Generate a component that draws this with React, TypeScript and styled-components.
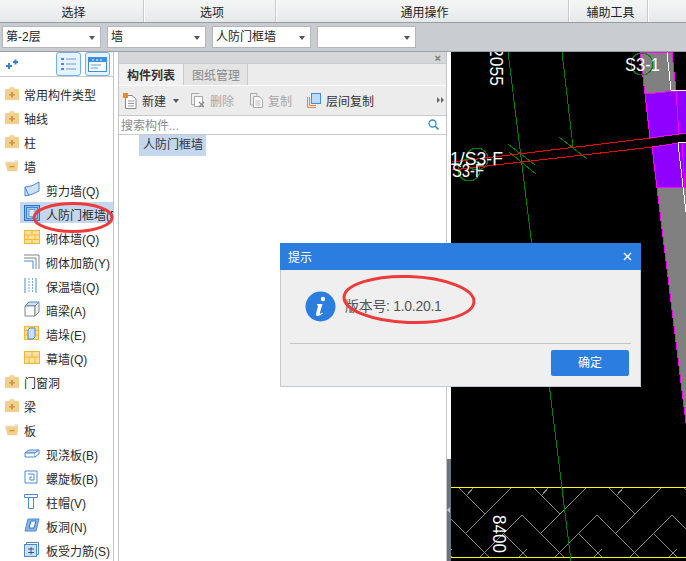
import React from "react";
import styled, { createGlobalStyle } from "styled-components";

const GlobalStyle = createGlobalStyle`
  html, body {
    margin: 0;
    padding: 0;
    background: #fff;
  }
  * {
    box-sizing: border-box;
  }
`;

const Page = styled.div`
  position: relative;
  width: 686px;
  height: 561px;
  overflow: hidden;
  display: flex;
  flex-direction: column;
  font-family: "Liberation Sans", "Noto Sans CJK SC", sans-serif;
  font-size: 12px;
  color: #333;
`;

const MenuBar = styled.div`
  display: grid;
  grid-template-columns: 145px 132px 293px 79px 1fr;
  height: 23px;
  background: linear-gradient(#f4f6f6, #e6e9ea);
  border-bottom: 1px solid #9a9da0;
`;

const MenuGroup = styled.div`
  display: flex;
  align-items: center;
  justify-content: center;
  padding-left: 3px;
  border-right: 1px solid #fff;
  box-shadow: inset -1px 0 0 #c6c9cb;
  color: #222;
`;

const SelectBar = styled.div`
  display: flex;
  align-items: center;
  gap: 6px;
  height: 29px;
  padding: 0 2px;
  background: #c9ccd0;
  border-bottom: 1px solid #9da0a3;
`;

const SelectBox = styled.div`
  position: relative;
  width: 99px;
  height: 22px;
  padding-left: 3px;
  line-height: 20px;
  background: #fff;
  border: 1px solid #b4b7ba;
  color: #222;

  &::after {
    content: "";
    position: absolute;
    right: 5px;
    top: 9px;
    border: 3.5px solid transparent;
    border-top: 4px solid #555;
    border-bottom: 0;
  }
`;

const Main = styled.div`
  flex: 1;
  display: flex;
  min-height: 0;
`;

const TreePanel = styled.div`
  width: 119px;
  flex: none;
  display: flex;
  flex-direction: column;
  border-right: 1px solid #c2c4c7;
  background: linear-gradient(to right, #fff 113px, #c2c4c7 113px, #c2c4c7 114px, #fff 114px);
`;

const TreeHead = styled.div`
  display: flex;
  align-items: center;
  gap: 4px;
  width: 113px;
  height: 28px;
  padding-left: 6px;
  border-bottom: 1px solid #c8cacc;
  background: #fff;
`;

const AddIcon = styled.svg`
  margin-right: 34px;
`;

const ViewButton = styled.div`
  width: 25px;
  height: 24px;
  display: flex;
  align-items: center;
  justify-content: center;
  background: #e6f2fd;
  border: 1px solid #6fb1ee;
  border-radius: 3px;
`;

const TreeList = styled.div`
  padding-top: 4px;
`;

const TreeRow = styled.div<{ $child?: boolean; $selected?: boolean }>`
  position: relative;
  display: flex;
  align-items: center;
  width: 113px;
  height: 24px;
  padding-left: ${({ $child }) => ($child ? "24px" : "5px")};
  gap: ${({ $child }) => ($child ? "6px" : "5px")};
  white-space: nowrap;
  overflow: hidden;
  color: #2a2a2a;

  ${({ $selected }) =>
    $selected &&
    `
    &::before {
      content: "";
      position: absolute;
      left: 20px;
      right: 0;
      top: 1px;
      bottom: 2px;
      background: #c5d7ee;
    }
  `}
`;

const RowIcon = styled.span<{ $child?: boolean }>`
  position: relative;
  display: flex;
  flex: none;
  width: ${({ $child }) => ($child ? "16px" : "14px")};
`;

const RowLabel = styled.span`
  position: relative;
  padding-top: 2px;
`;

const ListPanel = styled.div`
  width: 328px;
  flex: none;
  display: flex;
  flex-direction: column;
  border-right: 1px solid #c2c4c7;
`;

const PanelStrip = styled.div`
  display: flex;
  align-items: center;
  justify-content: flex-end;
  height: 11px;
  padding-right: 5px;
  background: #d4d6da;
  color: #777;
  font-size: 11px;
  font-weight: bold;
`;

const TabRow = styled.div`
  display: flex;
  height: 23px;
  background: #ececec;
  border-top: 1px solid #c8cacc;
  border-bottom: 1px solid #fff;
`;

const Tab = styled.div<{ $active?: boolean }>`
  display: flex;
  align-items: center;
  padding: 0 8px;
  width: ${({ $active }) => ($active ? "65px" : "64px")};
  white-space: nowrap;
  font-weight: ${({ $active }) => ($active ? "bold" : "normal")};
  color: ${({ $active }) => ($active ? "#333" : "#8a8a8a")};
  background: ${({ $active }) => ($active ? "#f1f1f1" : "#e4e4e4")};
  border-right: 1px solid #c8cacc;
`;

const ToolRow = styled.div`
  position: relative;
  display: flex;
  align-items: center;
  height: 30px;
  padding-left: 4px;
  background: #ececec;
  border-bottom: 1px solid #c8cacc;
`;

const ToolItem = styled.div<{ $off?: boolean; $gap: number }>`
  display: flex;
  align-items: center;
  gap: 5px;
  margin-right: ${({ $gap }) => $gap}px;
  white-space: nowrap;
  color: ${({ $off }) => ($off ? "#a8a8a8" : "#333")};
`;

const Caret = styled.span`
  width: 0;
  height: 0;
  margin-right: 12px;
  border: 3px solid transparent;
  border-top: 4px solid #555;
  border-bottom: 0;
`;

const MoreArrows = styled.svg`
  position: absolute;
  right: 2px;
  top: 11px;
`;

const SearchRow = styled.div`
  display: flex;
  align-items: center;
  justify-content: space-between;
  height: 19px;
  padding: 0 7px 1px 2px;
  color: #8a8a8a;
  border-bottom: 1px solid #c8cacc;
`;

const ItemList = styled.div`
  padding: 0 0 0 20px;
`;

const Item = styled.div`
  width: 67px;
  height: 21px;
  line-height: 20px;
  padding-left: 4px;
  white-space: nowrap;
  background: #c5d7ee;
`;

const Splitter = styled.div`
  width: 4px;
  flex: none;
  display: flex;
  flex-direction: column;
  justify-content: flex-end;
  background: #fff;
`;

const SplitterGrip = styled.div`
  height: 102px;
  display: flex;
  align-items: center;
  background: #68747e;

  &::before {
    content: "";
    border: 3px solid transparent;
    border-right: 3px solid #c8ccd0;
    border-left: 0;
  }
`;

const Canvas = styled.div`
  flex: 1;
  background: #000;
  overflow: hidden;
`;

const CanvasDrawing = styled.svg`
  display: block;
  shape-rendering: crispEdges;
`;

const CadText = styled.text`
  fill: #fff;
  font-family: "Liberation Sans", sans-serif;
  font-size: 19px;
`;

const Dialog = styled.div`
  position: absolute;
  left: 280px;
  top: 243px;
  width: 361px;
  height: 144px;
  display: flex;
  flex-direction: column;
  background: #efefef;
  border: 1px solid #c4c9d0;
`;

const DialogTitle = styled.div`
  display: flex;
  align-items: center;
  justify-content: space-between;
  flex: none;
  height: 27px;
  margin: -1px -1px 0;
  padding: 0 9px 0 8px;
  background: #2b7de0;
  color: #fff;
`;

const DialogBody = styled.div`
  flex: 1;
  display: flex;
  align-items: center;
  gap: 9px;
  padding: 0 0 0 24px;
`;

const DialogText = styled.span`
  padding-bottom: 4px;
  color: #555;
  font-size: 14px;
  letter-spacing: -0.3px;
`;

const DialogFooter = styled.div`
  display: flex;
  justify-content: flex-end;
  flex: none;
  height: 43px;
  margin: 0 9px;
  padding: 6px 2px 0 0;
  border-top: 1px solid #c4c5c7;
`;

const OkButton = styled.div`
  width: 78px;
  height: 26px;
  line-height: 26px;
  text-align: center;
  background: #2b7de0;
  border-radius: 2px;
  color: #fff;
`;

const Marker = styled.svg`
  position: absolute;
  left: 0;
  top: 0;
  pointer-events: none;
`;

const FolderClosed = () => (
  <svg width="14" height="13" viewBox="0 0 14 13">
    <path d="M4 2 Q4 0 6 0 H9 Q10 0 10 2 Z" fill="#f0d8a8" />
    <rect y="2" width="14" height="11" fill="#f3cf8d" />
    <path d="M6 5 H8 V7 H10 V8.500 H8 V10.500 H6 V8.500 H4 V7 H6 Z" fill="#c99b45" />
  </svg>
);

const FolderOpen = () => (
  <svg width="16" height="13" viewBox="0 0 16 13">
    <path d="M1 2 H11 V0.500 H15 V4 H1 Z" fill="#e9e2cf" />
    <path d="M0 3 H15 L14 13 H3 Z" fill="#f3cf8d" />
    <rect x="5" y="7" width="6" height="1.500" fill="#c99b45" />
  </svg>
);

type IconProps = { kind: string };

const BLUE = "#4a8ad4";
const TINT = "#cfe0f5";
const BRICK = "#f5b731";
const BRICKFILL = "#fbe0a2";

const WallIcon = ({ kind }: IconProps) => {
  switch (kind) {
    case "shear":
      return (
        <svg width="16" height="16" viewBox="0 0 16 16">
          <path d="M1 6 Q8 6 15 1 V10 Q8 14 1 15 Z" fill={TINT} stroke={BLUE} />
          <path d="M1 6 L5 15" stroke={BLUE} fill="none" />
        </svg>
      );
    case "frame":
      return (
        <svg width="16" height="16" viewBox="0 0 16 16">
          <rect x="0.500" y="0.500" width="15" height="15" fill="#8db8ea" stroke="#2f74c8" />
          <rect x="2.500" y="2.500" width="11" height="11" fill="#a9c8ec" stroke="#3f86d8" />
          <rect x="5" y="4.500" width="6" height="7" fill="#dbe8f7" stroke="#6ea4e2" />
        </svg>
      );
    case "brick":
      return (
        <svg width="16" height="14" viewBox="0 0 16 14">
          <rect x="0.500" y="0.500" width="15" height="13" fill={BRICKFILL} stroke={BRICK} />
          <path d="M0 5 H16 M0 9.500 H16 M8 0 V5 M4 5 V9.500 M11 5 V9.500 M8 9.500 V14" stroke={BRICK} />
        </svg>
      );
    case "rebar":
      return (
        <svg width="16" height="15" viewBox="0 0 16 15">
          <path d="M0 1 H15 V15 M0 4 H12 V15" stroke="#7b8794" fill="none" />
          <path d="M0 7 H9 V15" stroke={BLUE} fill="none" />
        </svg>
      );
    case "insulation":
      return (
        <svg width="14" height="15" viewBox="0 0 14 15">
          <path d="M1 0 V15 M12 0 V15" stroke={BLUE} />
          <path d="M5 0 V15 M8.500 0 V15" stroke="#7ca8dc" strokeDasharray="2 1" />
        </svg>
      );
    case "beam":
      return (
        <svg width="16" height="16" viewBox="0 0 16 16">
          <path d="M1 5 L5 1 H15 L11 5 Z" fill={TINT} stroke={BLUE} />
          <path d="M1 5 H11 V15 H1 Z" fill="#fff" stroke="#7b8794" />
          <path d="M11 5 L15 1 V11 L11 15 Z" fill="#eef1f4" stroke="#7b8794" />
        </svg>
      );
    case "pier":
      return (
        <svg width="15" height="14" viewBox="0 0 15 14">
          <rect x="0.500" y="0.500" width="14" height="13" fill={BRICKFILL} stroke={BRICK} />
          <path d="M0 4.500 H15 M0 9 H15 M5 0 V14 M10 0 V14" stroke={BRICK} />
          <path d="M4 4 L6 2 H11 V11 L9 13 H4 Z" fill={TINT} stroke={BLUE} />
        </svg>
      );
    case "curtain":
      return (
        <svg width="16" height="13" viewBox="0 0 16 13">
          <rect x="0.500" y="0.500" width="15" height="12" fill={BRICKFILL} stroke={BRICK} />
          <path d="M0 6 H16 M8 0 V6 M5 6 V13 M11 6 V13" stroke={BRICK} />
        </svg>
      );
    case "slab":
      return (
        <svg width="16" height="9" viewBox="0 0 16 9">
          <path d="M1 4 L5 1 H15 L11 4 Z" fill={TINT} stroke={BLUE} />
          <path d="M1 4 H11 V8 H1 Z" fill="#fff" stroke={BLUE} />
          <path d="M11 4 L15 1 V5 L11 8" fill="#fff" stroke={BLUE} />
        </svg>
      );
    case "spiral":
      return (
        <svg width="14" height="14" viewBox="0 0 14 14">
          <path d="M1 1 H13 V13 H1 Z M4 4 H10 V10 H6 V7 H8" stroke={BLUE} fill="none" />
        </svg>
      );
    case "cap":
      return (
        <svg width="14" height="15" viewBox="0 0 14 15">
          <path d="M0.500 0.500 H13.500 V3.500 H0.500 Z M4.500 3.500 H9.500 V14.500 H4.500 Z" fill="#fff" stroke={BLUE} />
        </svg>
      );
    case "hole":
      return (
        <svg width="16" height="14" viewBox="0 0 16 14">
          <path d="M4 1 H15 L12 13 H1 Z" fill="#8fb5e4" stroke={BLUE} />
          <path d="M7 3 H12 L10 10 H5 Z" fill="#fff" stroke="#2f74c8" />
        </svg>
      );
    default:
      return (
        <svg width="15" height="15" viewBox="0 0 15 15">
          <rect x="0.500" y="2.500" width="12" height="12" fill={TINT} stroke={BLUE} />
          <path d="M2.500 2.500 V0.500 H14.500 V12.500 H12.500" stroke={BLUE} fill="none" />
          <path d="M4 7 H10 M4 10.500 H10 M7 5 V12.500" stroke="#33577f" />
        </svg>
      );
  }
};

const treeRows = [
  { label: "常用构件类型", folder: "closed" },
  { label: "轴线", folder: "closed" },
  { label: "柱", folder: "closed" },
  { label: "墙", folder: "open" },
  { label: "剪力墙(Q)", icon: "shear" },
  { label: "人防门框墙(F)", icon: "frame", selected: true },
  { label: "砌体墙(Q)", icon: "brick" },
  { label: "砌体加筋(Y)", icon: "rebar" },
  { label: "保温墙(Q)", icon: "insulation" },
  { label: "暗梁(A)", icon: "beam" },
  { label: "墙垛(E)", icon: "pier" },
  { label: "幕墙(Q)", icon: "curtain" },
  { label: "门窗洞", folder: "closed" },
  { label: "梁", folder: "closed" },
  { label: "板", folder: "open" },
  { label: "现浇板(B)", icon: "slab" },
  { label: "螺旋板(B)", icon: "spiral" },
  { label: "柱帽(V)", icon: "cap" },
  { label: "板洞(N)", icon: "hole" },
  { label: "板受力筋(S)", icon: "slabbar" },
];

const hatchTile = [
  [18, 0, 45, 27],
  [34, 0, 26, 9],
  [72, 0, 26, 46],
  [7, 28, 49, 70],
  [82, 28, 40, 70],
  [63, 46, 87, 70],
  [79, 70, 87, 62],
];

const CadDrawing = () => (
  <CanvasDrawing width="235" height="509" viewBox="451 52 235 509">
    {/* 墙体 */}
    <path d="M640 52 H672 L676 91 L645 94 Z" fill="#808080" stroke="#ff00ff" />
    <path d="M657 188 L686 423 V187 Z" fill="#808080" />
    <path d="M657 188 L686 423" stroke="#ff00ff" fill="none" />
    <path d="M645 94 L686 90 V133 L650 138 Z" fill="#9000ff" stroke="#ff00ff" />
    <path d="M652 147 L686 142 V187 L657 188 Z" fill="#9000ff" stroke="#ff00ff" />
    <path d="M676 92 L679 135 M682 143 L685 187" stroke="#ff00ff" fill="none" />
    <path d="M667 52 L671 90 H686 M678 143 L683 187 L686 212 M678 143 L686 142" stroke="#fff" fill="none" />

    {/* 填充带 */}
    <clipPath id="band">
      <rect x="451" y="488" width="235" height="69" />
    </clipPath>
    <g clipPath="url(#band)" stroke="#8c8c8c">
      {[365, 440, 515, 590, 665].map((x) =>
        hatchTile.map(([x1, y1, x2, y2], i) => (
          <line key={`${x}-${i}`} x1={x + x1} y1={487 + y1} x2={x + x2} y2={487 + y2} />
        ))
      )}
    </g>
    <path d="M451 487.500 H686 M451 557.500 H686" stroke="#ffff00" />

    {/* 轴线 */}
    <g stroke="#008000" fill="none">
      <path d="M508 52 L571 561 M562 52 L573 147" />
      <path d="M508 144 L535 165 M509 152 L536 174 M559 137 L587 159" />
      <circle cx="642" cy="64" r="11" />
      <circle cx="477" cy="159" r="11" />
      <circle cx="469" cy="170" r="11" />
    </g>
    <path d="M452 162 L651 138 M452 170 L653 147" stroke="#ff0000" fill="none" />

    <CadText x="625" y="71" textLength="35" lengthAdjust="spacingAndGlyphs">S3-1</CadText>
    <CadText x="450" y="165" textLength="53" lengthAdjust="spacingAndGlyphs">1/S3-F</CadText>
    <CadText x="452" y="177" textLength="32" lengthAdjust="spacingAndGlyphs">S3-F</CadText>
    <CadText transform="translate(490 47) rotate(90)" textLength="39" lengthAdjust="spacingAndGlyphs">2055</CadText>
    <CadText transform="translate(493 515) rotate(90)" textLength="38" lengthAdjust="spacingAndGlyphs">8400</CadText>
  </CanvasDrawing>
);

const App: React.FC = () => (
  <Page>
    <GlobalStyle />
    <MenuBar>
      <MenuGroup>选择</MenuGroup>
      <MenuGroup>选项</MenuGroup>
      <MenuGroup>通用操作</MenuGroup>
      <MenuGroup>辅助工具</MenuGroup>
      <span />
    </MenuBar>
    <SelectBar>
      <SelectBox>第-2层</SelectBox>
      <SelectBox>墙</SelectBox>
      <SelectBox>人防门框墙</SelectBox>
      <SelectBox />
    </SelectBar>
    <Main>
      <TreePanel>
        <TreeHead>
          <AddIcon width="12" height="10" viewBox="0 0 12 10">
            <path d="M0 7 H6 M3 4 V10 M7 3 H12 M9.500 0.500 V5.500" stroke="#3b7fd0" strokeWidth="2" fill="none" />
          </AddIcon>
          <ViewButton>
            <svg width="15" height="14" viewBox="0 0 15 14">
              <path d="M0 2 H3 M0 7 H3 M0 12 H3" stroke="#3b8fe0" strokeWidth="2" />
              <path d="M5 2 H15 M5 7 H15 M5 12 H15" stroke="#6d9ccf" />
            </svg>
          </ViewButton>
          <ViewButton>
            <svg width="19" height="15" viewBox="0 0 19 15">
              <rect x="0.500" y="0.500" width="18" height="14" fill="#fff" stroke="#3b8fe0" />
              <rect x="1" y="1" width="17" height="4" fill="#3b8fe0" />
              <path d="M4 3 H6 M8 3 H10 M12 3 H14" stroke="#fff" />
              <path d="M3 8 H13 M3 11 H10" stroke="#5b9ad8" />
            </svg>
          </ViewButton>
        </TreeHead>
        <TreeList>
          {treeRows.map((row) => (
            <TreeRow key={row.label} $child={!row.folder} $selected={row.selected}>
              <RowIcon $child={!row.folder}>
                {row.folder === "closed" && <FolderClosed />}
                {row.folder === "open" && <FolderOpen />}
                {row.icon && <WallIcon kind={row.icon} />}
              </RowIcon>
              <RowLabel>{row.label}</RowLabel>
            </TreeRow>
          ))}
        </TreeList>
      </TreePanel>
      <ListPanel>
        <PanelStrip>×</PanelStrip>
        <TabRow>
          <Tab $active>构件列表</Tab>
          <Tab>图纸管理</Tab>
        </TabRow>
        <ToolRow>
          <ToolItem $gap={7}>
            <svg width="14" height="16" viewBox="0 0 14 16">
              <path d="M2.500 2.500 H9 L13 6 V15.500 H2.500 Z" fill="#fff" stroke="#888" />
              <path d="M5 8 H11 M5 10.500 H11 M5 13 H11" stroke="#999" />
              <rect x="0" y="0" width="5" height="5" fill="#f08a24" />
            </svg>
            新建
          </ToolItem>
          <Caret />
          <ToolItem $off $gap={16}>
            <svg width="14" height="15" viewBox="0 0 14 15">
              <path d="M0.500 0.500 H8.500 M0.500 0.500 V11.500 H3" stroke="#aaa" fill="none" />
              <rect x="3.500" y="3.500" width="8" height="10" fill="#fff" stroke="#aaa" />
              <path d="M8 9 L13 14 M13 9 L8 14" stroke="#888" strokeWidth="1.200" />
            </svg>
            删除
          </ToolItem>
          <ToolItem $off $gap={15}>
            <svg width="13" height="15" viewBox="0 0 13 15">
              <path d="M0.500 0.500 H7 V3 M0.500 0.500 V12 H3" stroke="#aaa" fill="none" />
              <path d="M3.500 3.500 H9 L12.500 6.500 V14.500 H3.500 Z" fill="#fff" stroke="#aaa" />
              <path d="M5.500 8 H10.500 M5.500 10 H10.500 M5.500 12 H10.500" stroke="#bbb" />
            </svg>
            复制
          </ToolItem>
          <ToolItem $gap={0}>
            <svg width="14" height="15" viewBox="0 0 14 15">
              <path d="M0.500 4 V14.500 H9 M2.500 4 V12.500 H9" stroke="#e8853a" fill="none" />
              <rect x="4.500" y="0.500" width="9" height="10" fill="#bcd9f8" stroke="#3f8ee0" />
            </svg>
            层间复制
          </ToolItem>
          <MoreArrows width="7" height="6" viewBox="0 0 7 6">
            <path d="M0 0 L3 3 L0 6 Z M4 0 L7 3 L4 6 Z" fill="#666" />
          </MoreArrows>
        </ToolRow>
        <SearchRow>
          搜索构件...
          <svg width="11" height="11" viewBox="0 0 11 11">
            <circle cx="4.500" cy="4.500" r="3.500" stroke="#3a8cc4" strokeWidth="1.300" fill="none" />
            <path d="M7 7 L10.500 10.500" stroke="#3a8cc4" strokeWidth="1.600" />
          </svg>
        </SearchRow>
        <ItemList>
          <Item>人防门框墙</Item>
        </ItemList>
      </ListPanel>
      <Splitter>
        <SplitterGrip />
      </Splitter>
      <Canvas>
        <CadDrawing />
      </Canvas>
    </Main>
    <Dialog>
      <DialogTitle>
        提示
        <svg width="9" height="9" viewBox="0 0 9 9">
          <path d="M1 1 L8 8 M8 1 L1 8" stroke="#fff" strokeWidth="1.400" />
        </svg>
      </DialogTitle>
      <DialogBody>
        <svg width="31" height="31" viewBox="0 0 31 31">
          <circle cx="15.500" cy="15.500" r="15" fill="#2b7de0" />
          <circle cx="18" cy="8" r="2.200" fill="#fff" />
          <path d="M12 13 H17.500 L14.800 22 Q14.500 23.500 17.500 21.500 L18 22.300 Q14.500 25.500 11.800 24.800 Q10.300 24.300 11.200 21.800 L13.200 14.500 H12 Z" fill="#fff" />
        </svg>
        <DialogText>版本号: 1.0.20.1</DialogText>
      </DialogBody>
      <DialogFooter>
        <OkButton>确定</OkButton>
      </DialogFooter>
    </Dialog>
    <Marker width="686" height="561" viewBox="0 0 686 561">
      <g fill="none" stroke="#ee3a3a" strokeWidth="3">
        <ellipse cx="73" cy="217.500" rx="39" ry="14" />
        <ellipse cx="409" cy="299.500" rx="65" ry="23" transform="rotate(2 409 299.500)" />
      </g>
    </Marker>
  </Page>
);

export default App;
